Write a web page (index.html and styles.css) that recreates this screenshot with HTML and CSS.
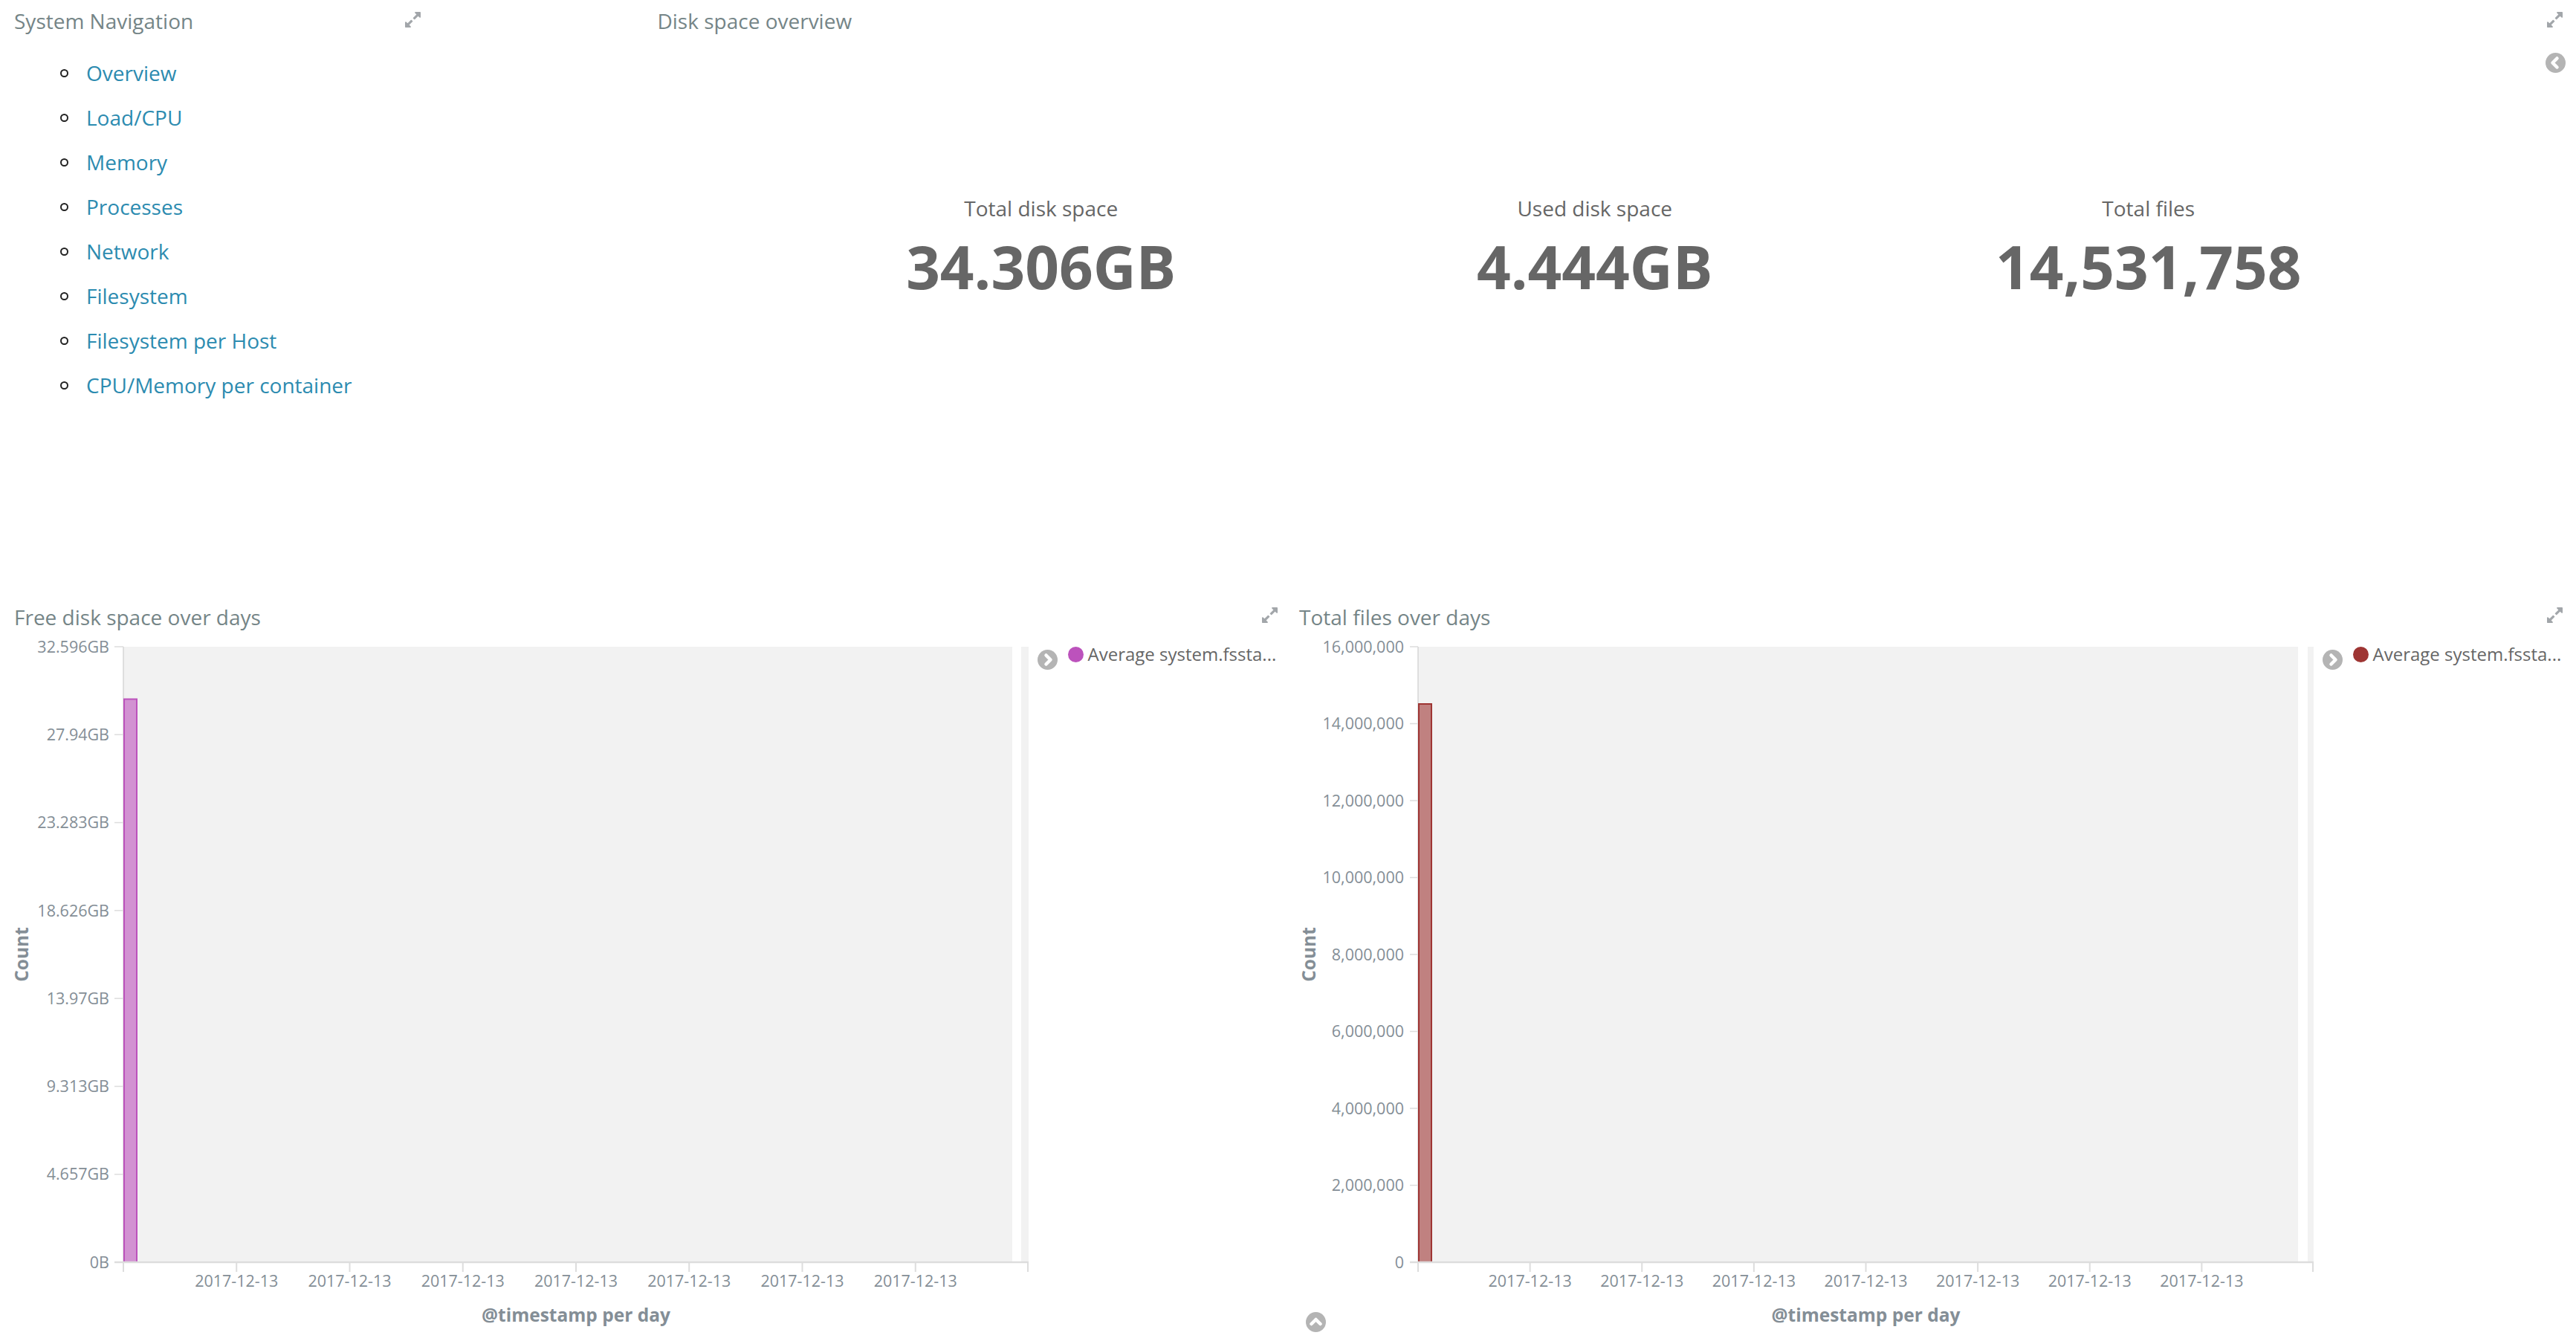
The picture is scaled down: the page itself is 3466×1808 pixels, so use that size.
FILE: index.html
```html
<!DOCTYPE html>
<html>
<head>
<meta charset="utf-8">
<title>Dashboard</title>
<link rel="stylesheet" href="styles.css">
</head>
<body>
<div class="dashboard">

  <section class="panel panel-nav">
    <header class="panel-head">
      <h2 class="panel-title">System Navigation</h2>
      <svg class="expand-icon" viewBox="128 128 1536 1536"><path d="M883 1056q0 13-10 23l-332 332 144 144q19 19 19 45t-19 45-45 19h-448q-26 0-45-19t-19-45v-448q0-26 19-45t45-19 45 19l144 144 332-332q10-10 23-10t23 10l114 114q10 10 10 23zm781-864v448q0 26-19 45t-45 19-45-19l-144-144-332 332q-10 10-23 10t-23-10l-114-114q-10-10-10-23t10-23l332-332-144-144q-19-19-19-45t19-45 45-19h448q26 0 45 19t19 45z"/></svg>
    </header>
    <ul class="nav-list">
      <li><a href="#">Overview</a></li>
      <li><a href="#">Load/CPU</a></li>
      <li><a href="#">Memory</a></li>
      <li><a href="#">Processes</a></li>
      <li><a href="#">Network</a></li>
      <li><a href="#">Filesystem</a></li>
      <li><a href="#">Filesystem per Host</a></li>
      <li><a href="#">CPU/Memory per container</a></li>
    </ul>
  </section>

  <section class="panel panel-metrics">
    <header class="panel-head">
      <h2 class="panel-title">Disk space overview</h2>
      <svg class="expand-icon" viewBox="128 128 1536 1536"><path d="M883 1056q0 13-10 23l-332 332 144 144q19 19 19 45t-19 45-45 19h-448q-26 0-45-19t-19-45v-448q0-26 19-45t45-19 45 19l144 144 332-332q10-10 23-10t23 10l114 114q10 10 10 23zm781-864v448q0 26-19 45t-45 19-45-19l-144-144-332 332q-10 10-23 10t-23-10l-114-114q-10-10-10-23t10-23l332-332-144-144q-19-19-19-45t19-45 45-19h448q26 0 45 19t19 45z"/></svg>
    </header>
    <div class="metrics">
      <div class="metric">
        <div class="metric-label">Total disk space</div>
        <div class="metric-value">34.306GB</div>
      </div>
      <div class="metric">
        <div class="metric-label">Used disk space</div>
        <div class="metric-value">4.444GB</div>
      </div>
      <div class="metric">
        <div class="metric-label">Total files</div>
        <div class="metric-value">14,531,758</div>
      </div>
    </div>
    <svg class="toggle toggle-metrics" viewBox="0 0 27 27"><circle cx="13.5" cy="13.5" r="13.5" class="toggle-bg"/><polyline points="15.5,7.5 9.5,13.5 15.5,19.5" class="toggle-chev"/></svg>
  </section>

  <section class="panel panel-free">
    <header class="panel-head">
      <h2 class="panel-title">Free disk space over days</h2>
      <svg class="expand-icon" viewBox="128 128 1536 1536"><path d="M883 1056q0 13-10 23l-332 332 144 144q19 19 19 45t-19 45-45 19h-448q-26 0-45-19t-19-45v-448q0-26 19-45t45-19 45 19l144 144 332-332q10-10 23-10t23 10l114 114q10 10 10 23zm781-864v448q0 26-19 45t-45 19-45-19l-144-144-332 332q-10 10-23 10t-23-10l-114-114q-10-10-10-23t10-23l332-332-144-144q-19-19-19-45t19-45 45-19h448q26 0 45 19t19 45z"/></svg>
    </header>
    <div class="chart-body">
      <svg class="chart" viewBox="0 0 1380 950">
        <rect class="plot-bg" x="158" y="20" width="1196" height="828"/>
        <rect class="plot-bg" x="1366" y="20" width="10" height="828"/>
        <line class="axis-y" x1="158" y1="20" x2="158" y2="848"/>
        <g class="ticks-y">
          <line x1="146" y1="20" x2="158" y2="20"/>
          <line x1="146" y1="138.29" x2="158" y2="138.29"/>
          <line x1="146" y1="256.57" x2="158" y2="256.57"/>
          <line x1="146" y1="374.86" x2="158" y2="374.86"/>
          <line x1="146" y1="493.14" x2="158" y2="493.14"/>
          <line x1="146" y1="611.43" x2="158" y2="611.43"/>
          <line x1="146" y1="729.71" x2="158" y2="729.71"/>
        </g>
        <g class="labels-y">
          <text x="139" y="20" dy="0.36em">32.596GB</text>
          <text x="139" y="138.29" dy="0.36em">27.94GB</text>
          <text x="139" y="256.57" dy="0.36em">23.283GB</text>
          <text x="139" y="374.86" dy="0.36em">18.626GB</text>
          <text x="139" y="493.14" dy="0.36em">13.97GB</text>
          <text x="139" y="611.43" dy="0.36em">9.313GB</text>
          <text x="139" y="729.71" dy="0.36em">4.657GB</text>
          <text x="139" y="848" dy="0.36em">0B</text>
        </g>
        <rect class="bar bar-free" x="159" y="90.5" width="17" height="757.5"/>
        <line class="axis-x" x1="146" y1="848" x2="1376" y2="848"/>
        <g class="ticks-x">
          <line x1="158" y1="848" x2="158" y2="861"/>
          <line x1="310.25" y1="848" x2="310.25" y2="861"/>
          <line x1="462.5" y1="848" x2="462.5" y2="861"/>
          <line x1="614.75" y1="848" x2="614.75" y2="861"/>
          <line x1="767" y1="848" x2="767" y2="861"/>
          <line x1="919.25" y1="848" x2="919.25" y2="861"/>
          <line x1="1071.5" y1="848" x2="1071.5" y2="861"/>
          <line x1="1223.75" y1="848" x2="1223.75" y2="861"/>
          <line x1="1375" y1="848" x2="1375" y2="861"/>
        </g>
        <g class="labels-x">
          <text x="310.25" y="881">2017-12-13</text>
          <text x="462.5" y="881">2017-12-13</text>
          <text x="614.75" y="881">2017-12-13</text>
          <text x="767" y="881">2017-12-13</text>
          <text x="919.25" y="881">2017-12-13</text>
          <text x="1071.5" y="881">2017-12-13</text>
          <text x="1223.75" y="881">2017-12-13</text>
        </g>
        <text class="axis-title" x="767" y="928">@timestamp per day</text>
        <text class="axis-title" transform="translate(30,434) rotate(-90)">Count</text>
      </svg>
      <div class="legend">
        <svg class="toggle" viewBox="0 0 27 27"><circle cx="13.5" cy="13.5" r="13.5" class="toggle-bg"/><polyline points="11.5,7.5 17.5,13.5 11.5,19.5" class="toggle-chev"/></svg>
        <div class="legend-item"><span class="legend-dot dot-free"></span><span>Average system.fssta...</span></div>
      </div>
    </div>
  </section>

  <section class="panel panel-files">
    <header class="panel-head">
      <h2 class="panel-title">Total files over days</h2>
      <svg class="expand-icon" viewBox="128 128 1536 1536"><path d="M883 1056q0 13-10 23l-332 332 144 144q19 19 19 45t-19 45-45 19h-448q-26 0-45-19t-19-45v-448q0-26 19-45t45-19 45 19l144 144 332-332q10-10 23-10t23 10l114 114q10 10 10 23zm781-864v448q0 26-19 45t-45 19-45-19l-144-144-332 332q-10 10-23 10t-23-10l-114-114q-10-10-10-23t10-23l332-332-144-144q-19-19-19-45t19-45 45-19h448q26 0 45 19t19 45z"/></svg>
    </header>
    <div class="chart-body">
      <svg class="chart" viewBox="0 0 1380 950">
        <rect class="plot-bg" x="171" y="20" width="1184" height="828"/>
        <rect class="plot-bg" x="1368" y="20" width="8" height="828"/>
        <line class="axis-y" x1="171" y1="20" x2="171" y2="848"/>
        <g class="ticks-y">
          <line x1="160" y1="20" x2="171" y2="20"/>
          <line x1="160" y1="123.5" x2="171" y2="123.5"/>
          <line x1="160" y1="227" x2="171" y2="227"/>
          <line x1="160" y1="330.5" x2="171" y2="330.5"/>
          <line x1="160" y1="434" x2="171" y2="434"/>
          <line x1="160" y1="537.5" x2="171" y2="537.5"/>
          <line x1="160" y1="641" x2="171" y2="641"/>
          <line x1="160" y1="744.5" x2="171" y2="744.5"/>
        </g>
        <g class="labels-y">
          <text x="152" y="20" dy="0.36em">16,000,000</text>
          <text x="152" y="123.5" dy="0.36em">14,000,000</text>
          <text x="152" y="227" dy="0.36em">12,000,000</text>
          <text x="152" y="330.5" dy="0.36em">10,000,000</text>
          <text x="152" y="434" dy="0.36em">8,000,000</text>
          <text x="152" y="537.5" dy="0.36em">6,000,000</text>
          <text x="152" y="641" dy="0.36em">4,000,000</text>
          <text x="152" y="744.5" dy="0.36em">2,000,000</text>
          <text x="152" y="848" dy="0.36em">0</text>
        </g>
        <rect class="bar bar-files" x="172" y="97" width="17" height="751"/>
        <line class="axis-x" x1="160" y1="848" x2="1376" y2="848"/>
        <g class="ticks-x">
          <line x1="171" y1="848" x2="171" y2="861"/>
          <line x1="321.63" y1="848" x2="321.63" y2="861"/>
          <line x1="472.25" y1="848" x2="472.25" y2="861"/>
          <line x1="622.88" y1="848" x2="622.88" y2="861"/>
          <line x1="773.5" y1="848" x2="773.5" y2="861"/>
          <line x1="924.13" y1="848" x2="924.13" y2="861"/>
          <line x1="1074.75" y1="848" x2="1074.75" y2="861"/>
          <line x1="1225.38" y1="848" x2="1225.38" y2="861"/>
          <line x1="1375" y1="848" x2="1375" y2="861"/>
        </g>
        <g class="labels-x">
          <text x="321.63" y="881">2017-12-13</text>
          <text x="472.25" y="881">2017-12-13</text>
          <text x="622.88" y="881">2017-12-13</text>
          <text x="773.5" y="881">2017-12-13</text>
          <text x="924.13" y="881">2017-12-13</text>
          <text x="1074.75" y="881">2017-12-13</text>
          <text x="1225.38" y="881">2017-12-13</text>
        </g>
        <text class="axis-title" x="773.5" y="928">@timestamp per day</text>
        <text class="axis-title" transform="translate(33,434) rotate(-90)">Count</text>
      </svg>
      <div class="legend">
        <svg class="toggle" viewBox="0 0 27 27"><circle cx="13.5" cy="13.5" r="13.5" class="toggle-bg"/><polyline points="11.5,7.5 17.5,13.5 11.5,19.5" class="toggle-chev"/></svg>
        <div class="legend-item"><span class="legend-dot dot-files"></span><span>Average system.fssta...</span></div>
      </div>
    </div>
    <svg class="toggle toggle-bottom" viewBox="0 0 27 27"><circle cx="13.5" cy="13.5" r="13.5" class="toggle-bg"/><polyline points="7.5,16 13.5,10 19.5,16" class="toggle-chev"/></svg>
  </section>

</div>
</body>
</html>
```

FILE: styles.css
```css
html, body {
  margin: 0;
  padding: 0;
  background: #ffffff;
}

body {
  width: 3466px;
  height: 1808px;
  overflow: hidden;
  font-family: "Open Sans", "Noto Sans", sans-serif;
}

.dashboard {
  display: grid;
  grid-template-columns: repeat(12, 1fr);
  grid-template-rows: 786px 990px;
  column-gap: 16px;
  row-gap: 16px;
  padding: 8px 16px 0 8px;
  height: 1808px;
  box-sizing: border-box;
}

.panel {
  position: relative;
  min-width: 0;
}

.panel-nav { grid-column: 1 / 3; grid-row: 1; }
.panel-metrics { grid-column: 4 / 13; grid-row: 1; }
.panel-free { grid-column: 1 / 7; grid-row: 2; }
.panel-files { grid-column: 7 / 13; grid-row: 2; }

.panel-head {
  display: flex;
  justify-content: space-between;
  align-items: flex-start;
  height: 40px;
  padding: 0 2px 0 11px;
}

.panel-metrics .panel-head {
  padding-left: 12px;
}

.panel-title {
  margin: 0;
  font-size: 28px;
  line-height: 40px;
  font-weight: 400;
  color: #758587;
  white-space: nowrap;
}

.expand-icon {
  width: 21px;
  height: 21px;
  margin-top: 8px;
  fill: #a2a6aa;
  flex: none;
}

.panel-free .expand-icon,
.panel-files .expand-icon {
  margin-top: 7px;
}

/* navigation list */
.nav-list {
  list-style: none;
  margin: 20px 0 0;
  padding: 0 0 0 73px;
}

.nav-list li {
  display: flex;
  align-items: center;
  height: 60px;
  font-size: 28px;
  line-height: 60px;
}

.nav-list li::before {
  content: "";
  width: 11px;
  height: 11px;
  box-sizing: border-box;
  border: 2px solid #222222;
  border-radius: 50%;
  margin-right: 24px;
  flex: none;
}

.nav-list a {
  color: #2c8bb0;
  text-decoration: none;
}

/* metrics */
.metrics {
  display: flex;
  justify-content: center;
  padding: 213px 31px 0 0;
}

.metric {
  width: 745px;
  text-align: center;
  color: #666666;
}

.metric-label {
  font-size: 28px;
  line-height: 38px;
}

.metric-value {
  font-size: 80px;
  font-weight: 700;
  line-height: 96px;
  margin-top: 11px;
}

/* toggles */
.toggle {
  width: 27px;
  height: 27px;
  flex: none;
  display: block;
}

.toggle-bg {
  fill: #b4b4b4;
}

.toggle-chev {
  fill: none;
  stroke: #ffffff;
  stroke-width: 4.5;
  stroke-linecap: round;
  stroke-linejoin: round;
}

.toggle-metrics {
  position: absolute;
  top: 63px;
  right: -1.5px;
}

.toggle-bottom {
  position: absolute;
  left: 19.5px;
  top: 955px;
}

/* charts */
.chart-body {
  display: flex;
}

.chart {
  width: 1380px;
  height: 950px;
  flex: none;
  display: block;
}

.plot-bg {
  fill: #f2f2f2;
}

.axis-y {
  stroke: #d6d6d6;
  stroke-width: 1.5;
}

.ticks-y line {
  stroke: #dddddd;
  stroke-width: 1.5;
}

.axis-x {
  stroke: #dddddd;
  stroke-width: 2.5;
}

.ticks-x line {
  stroke: #dddddd;
  stroke-width: 2;
}

.chart text {
  font-family: "Open Sans", "Noto Sans", sans-serif;
  font-size: 21.5px;
  fill: #848e96;
}

.labels-y text {
  text-anchor: end;
}

.labels-x text {
  text-anchor: middle;
}

.chart .axis-title {
  font-size: 24.5px;
  font-weight: 700;
  text-anchor: middle;
}

.bar {
  stroke-width: 2;
  fill-opacity: 0.6;
}

.bar-free {
  fill: #bc52bc;
  stroke: #bc52bc;
}

.bar-files {
  fill: #9e3533;
  stroke: #9e3533;
}

/* legend */
.legend {
  flex: 1;
  display: flex;
  align-items: flex-start;
  padding-left: 8px;
  min-width: 0;
}

.legend .toggle {
  margin-top: 23.5px;
}

.legend-item {
  display: flex;
  align-items: center;
  gap: 6px;
  margin: 14px 0 0 13.5px;
  height: 32px;
  font-size: 24px;
  line-height: 32px;
  color: #666666;
  white-space: nowrap;
}

.legend-dot {
  width: 21px;
  height: 21px;
  border-radius: 50%;
  flex: none;
}

.dot-free {
  background: #bc52bc;
}

.dot-files {
  background: #9e3533;
}
```
